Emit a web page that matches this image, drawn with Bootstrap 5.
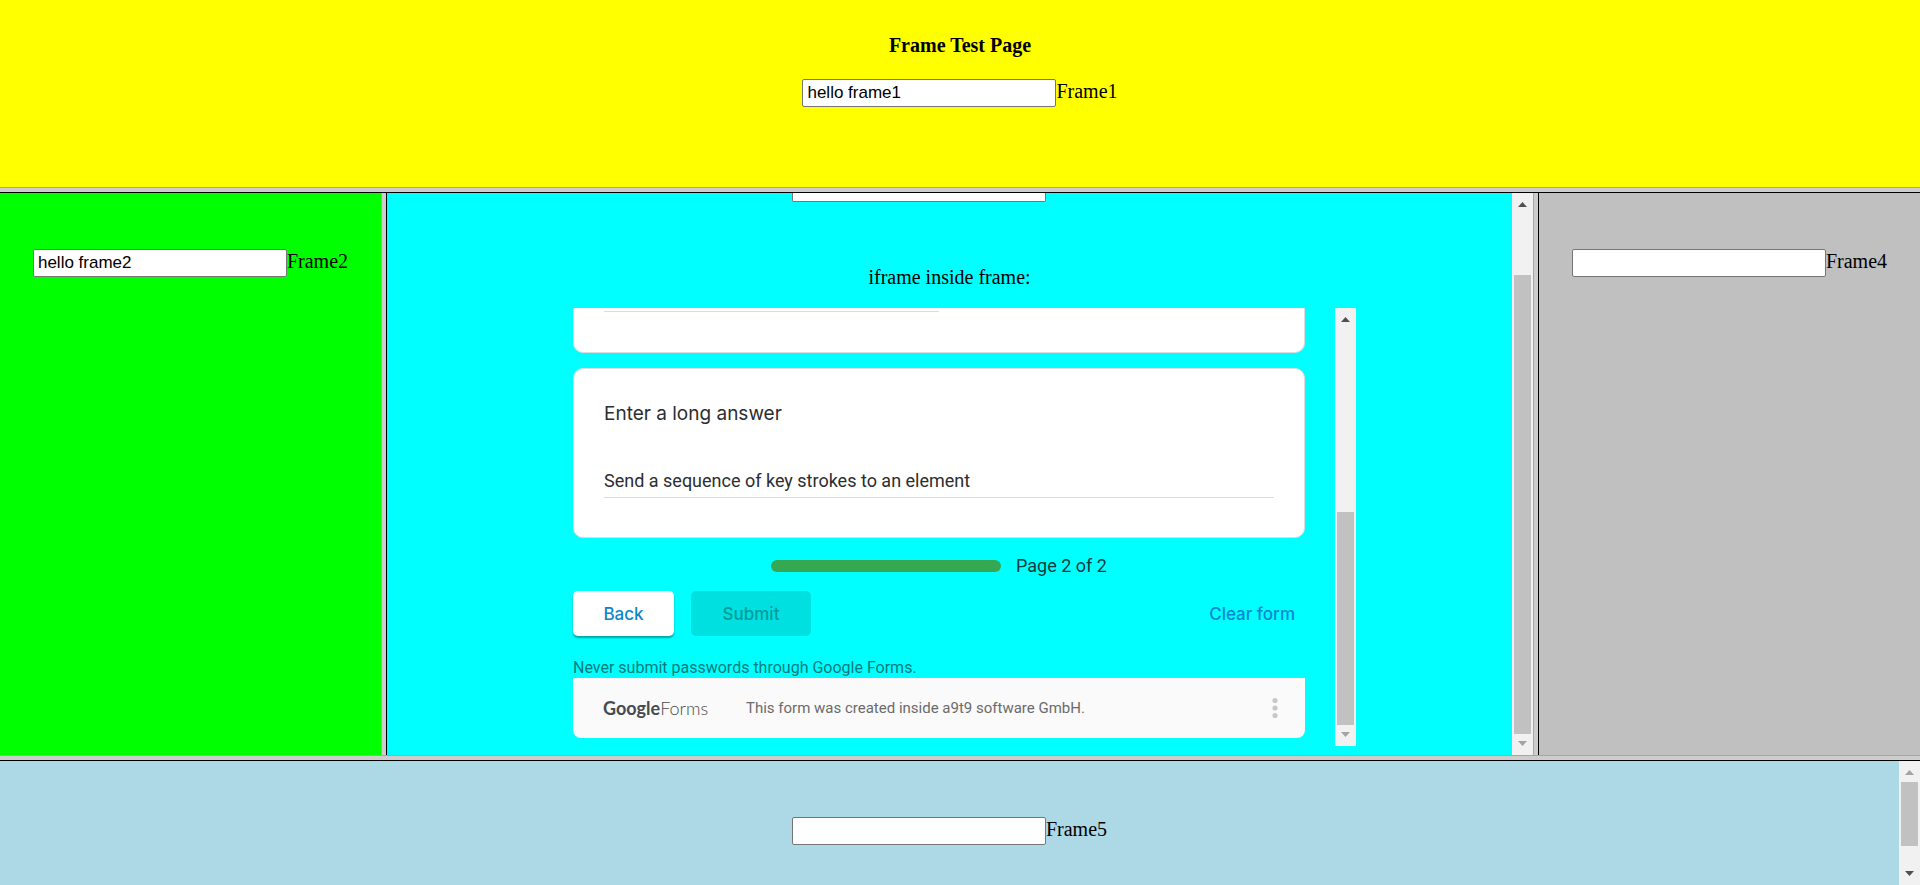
<!DOCTYPE html>
<html lang="en">
<head>
<meta charset="utf-8">
<meta name="viewport" content="width=device-width, initial-scale=1">
<title>Frame Test Page</title>
<link href="https://cdn.jsdelivr.net/npm/bootstrap@5.3.0/dist/css/bootstrap.min.css" rel="stylesheet">
<style>
  body { font: 20px/24px "Liberation Serif", serif; color: #000; }
  .frameset { display: grid; grid-template-rows: 1fr 6px 3fr 6px 124px; }
  .frame-cols { display: grid; grid-template-columns: 381fr 6px 1146fr 6px 381fr; }
  .frame-pane { min-width: 0; min-height: 0; overflow: hidden; }
  .split-h { background: #cdcdcd; border-top: 1px solid #a6a6a6; border-bottom: 1px solid #000; }
  .split-v { background: #cdcdcd; border-left: 1px solid #a6a6a6; border-right: 1px solid #000; }
  .pane-yellow { background: #ff0; padding-top: 33px; }
  .pane-lime { background: #0f0; padding-top: 56px; }
  .pane-aqua { background: #0ff; }
  .pane-silver { background: #c0c0c0; padding-top: 56px; }
  .pane-blue { background: #add8e6; }
  .page-title { font-size: 20px; line-height: 24px; margin-bottom: 22px; font-weight: 700; }
  .text-box { width: 254px; height: 28px; padding: 0 4px; border: 1px solid #767676; border-radius: 2px;
    background: #fff; color: #000; font: 17px/24px "Liberation Sans", sans-serif; }
  .text-box-cut { height: 9px; border-top: 0; border-radius: 0 0 2px 2px; }
  .cut-row { padding-right: 61px; height: 72px; }

  /* scroll bars */
  .bar { flex: 0 0 21px; background: #f1f1f1; }
  .bar svg { flex: 0 0 21px; width: 21px; }
  .thumb { background: #c1c1c1; margin: 0 2px; }

  /* embedded form */
  .embed { width: 813px; max-width: 100%; height: 438px; margin-top: 19px; font-family: Roboto, sans-serif; }
  .embed-body { padding: 0 30px; min-width: 0; }
  .q-card { background: #fff; border: 1px solid #dadce0; border-radius: 10px; padding: 0 30px; }
  .q-card-cut { height: 45px; border-top: 0; border-radius: 0 0 10px 10px; padding-top: 3px; margin-bottom: 15px; }
  .q-rule { width: 50%; height: 1px; background: #dadce0; }
  .q-card-long { height: 170px; padding-top: 32px; }
  .q-label { font: 19px/26px Inter, sans-serif; color: #2c2d30; }
  .q-answer { display: block; width: 100%; margin-top: 36px; padding: 2px 0 1px; height: 35px; border: 0;
    border-bottom: 1px solid #dadce0; background: transparent; color: #2c2d30; font: 18px/30px Roboto, sans-serif; }
  .page-row { height: 53px; gap: 15px; font-size: 18px; line-height: 22px; color: #0b3a3e; padding-top: 3px; }
  .page-bar { width: 230px; height: 12px; border-radius: 6px; --bs-progress-bg: #0ff; --bs-progress-bar-bg: #34a853; }
  .form-btn { height: 45px; border: 0; border-radius: 5px; padding: 0; font: 500 17px/24px Inter, sans-serif; }
  .btn-back { width: 101px; background: #fff; color: #0b86cb; box-shadow: 0 2px 2px rgba(0,0,0,.35); margin-right: 17px; }
  .btn-submit { width: 120px; background: #00e0e0; color: #009b9b; }
  .btn-clear { background: transparent; color: #0088d0; padding: 0 10px; }
  .never { font-size: 16px; line-height: 22px; margin-top: 21px; height: 21px; color: #007c7c; }
  .form-foot { height: 60px; background: #fafafa; border-radius: 0 0 8px 8px; padding: 0 20px 0 30px; }
  .logo-text { width: 103px; margin-right: 40px; color: #484b4e; font: 700 18px/24px Lato, sans-serif; }
  .logo-text span { font-weight: 300; }
  .foot-note { font-size: 15px; color: #6b6b6b; }
  .more { width: 20px; height: 30px; border: 0; padding: 0; background: transparent; }
  .more svg { display: block; }
</style>
</head>
<body>
<div class="frameset vh-100">
  <header class="frame-pane pane-yellow text-center">
    <h1 class="page-title">Frame Test Page</h1>
    <div class="d-flex justify-content-center align-items-start">
      <input class="text-box" id="f1" type="text" value="hello frame1"><label for="f1">Frame1</label>
    </div>
  </header>
  <div class="split-h"></div>
  <div class="frame-cols frame-pane">
    <section class="frame-pane pane-lime">
      <div class="d-flex justify-content-center align-items-start">
        <input class="text-box" id="f2" type="text" value="hello frame2"><label for="f2">Frame2</label>
      </div>
    </section>
    <div class="split-v"></div>
    <main class="frame-pane pane-aqua d-flex">
      <div class="flex-grow-1 frame-pane">
        <div class="cut-row d-flex justify-content-center align-items-start">
          <input class="text-box text-box-cut" type="text" aria-labelledby="inner">
        </div>
        <div class="text-center" id="inner">iframe inside frame:</div>
        <div class="embed d-flex mx-auto">
          <form class="embed-body flex-grow-1">
            <div class="q-card q-card-cut"><div class="q-rule"></div></div>
            <div class="q-card q-card-long">
              <label class="q-label d-block" for="long">Enter a long answer</label>
              <input class="q-answer" id="long" type="text" value="Send a sequence of key strokes to an element">
            </div>
            <div class="page-row d-flex justify-content-center align-items-center">
              <div class="progress page-bar"><div class="progress-bar w-100"></div></div>
              <span>Page 2 of 2</span>
            </div>
            <div class="d-flex">
              <button class="form-btn btn-back" type="button">Back</button>
              <button class="form-btn btn-submit" type="button">Submit</button>
              <button class="form-btn btn-clear ms-auto" type="button">Clear form</button>
            </div>
            <div class="never">Never submit passwords through Google Forms.</div>
            <div class="form-foot d-flex align-items-center">
              <div class="logo-text text-nowrap">Google<span>Forms</span></div>
              <div class="foot-note">This form was created inside a9t9 software GmbH.</div>
              <button class="more ms-auto" type="button">
                <svg width="20" height="30" viewBox="0 0 20 30" fill="#c8c8c8"><circle cx="10" cy="7.5" r="2.6"/><circle cx="10" cy="15" r="2.6"/><circle cx="10" cy="22.5" r="2.6"/></svg>
              </button>
            </div>
          </form>
          <div class="bar d-flex flex-column">
            <svg height="21" viewBox="0 0 21 21"><path d="M6 14L10.500 9L15 14Z" fill="#505050"/></svg>
            <div style="flex-grow:183"></div><div class="thumb" style="flex-grow:213"></div>
            <svg height="21" viewBox="0 0 21 21"><path d="M6 7L10.500 12L15 7Z" fill="#a3a3a3"/></svg>
          </div>
        </div>
      </div>
      <div class="bar d-flex flex-column">
        <svg height="21" viewBox="0 0 21 21"><path d="M6 14L10.500 9L15 14Z" fill="#505050"/></svg>
        <div style="flex-grow:61"></div><div class="thumb" style="flex-grow:459"></div>
        <svg height="21" viewBox="0 0 21 21"><path d="M6 7L10.500 12L15 7Z" fill="#a3a3a3"/></svg>
      </div>
    </main>
    <div class="split-v"></div>
    <section class="frame-pane pane-silver">
      <div class="d-flex justify-content-center align-items-start">
        <input class="text-box" id="f4" type="text"><label for="f4">Frame4</label>
      </div>
    </section>
  </div>
  <div class="split-h"></div>
  <footer class="frame-pane pane-blue d-flex">
    <div class="flex-grow-1 d-flex justify-content-center align-items-center pt-3">
      <div class="d-flex align-items-start">
        <input class="text-box" id="f5" type="text"><label for="f5">Frame5</label>
      </div>
    </div>
    <div class="bar d-flex flex-column">
      <svg height="21" viewBox="0 0 21 21"><path d="M6 14L10.500 9L15 14Z" fill="#a3a3a3"/></svg>
      <div class="thumb" style="flex-grow:64"></div><div style="flex-grow:18"></div>
      <svg height="21" viewBox="0 0 21 21"><path d="M6 7L10.500 12L15 7Z" fill="#505050"/></svg>
    </div>
  </footer>
</div>
<script src="https://cdn.jsdelivr.net/npm/bootstrap@5.3.0/dist/js/bootstrap.bundle.min.js"></script>
</body>
</html>
